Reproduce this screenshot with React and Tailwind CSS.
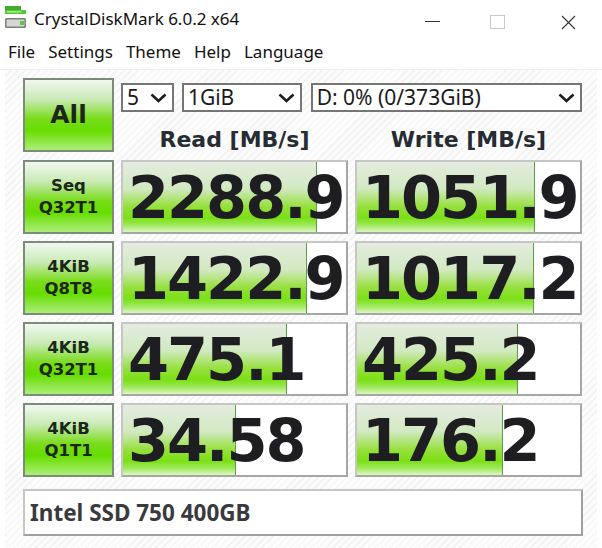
import React from "react";

const rows = [
  { label: ["Seq", "Q32T1"], read: "2288.9", readW: 196, write: "1051.9", writeW: 180 },
  { label: ["4KiB", "Q8T8"], read: "1422.9", readW: 186, write: "1017.2", writeW: 179 },
  { label: ["4KiB", "Q32T1"], read: "475.1", readW: 166, write: "425.2", writeW: 163 },
  { label: ["4KiB", "Q1T1"], read: "34.58", readW: 115, write: "176.2", writeW: 148 },
];

const greenBtn =
  "border-2 border-[#7c8c7a] bg-[linear-gradient(to_bottom,#f2f8f0_0%,#c8eab4_28%,#7adc1c_55%,#66dd00_72%,#acee78_100%)] flex flex-col items-center justify-center font-['DejaVu_Sans',sans-serif] font-bold text-[#1c261c]";

const Chevron = () => (
  <svg width="17" height="10" viewBox="0 0 17 10" className="shrink-0">
    <polyline points="1.5,1.5 8.5,8 15.5,1.5" fill="none" stroke="#1e1e1e" strokeWidth="2.6" />
  </svg>
);

const Select = ({ value, className }) => (
  <div
    className={`h-[29px] border-2 border-[#767676] bg-white flex items-center justify-between pl-[4px] pr-[5px] text-[21px] text-[#1a1a1a] font-['Noto_Sans',sans-serif] leading-none ${className}`}
  >
    <span>{value}</span>
    <Chevron />
  </div>
);

const ValueBox = ({ value, width }) => (
  <div className="relative h-[74px] border-2 border-[#c6c6c6] border-r-[#a6a6a6] border-b-[#a6a6a6] bg-white flex items-center overflow-hidden">
    <div
      className="absolute left-0 top-0 bottom-0 border-r border-[#5c9c48] bg-[linear-gradient(to_bottom,#e4ecdf_0%,#d2e9c2_38%,#96e03c_64%,#7ae014_80%,#9ee85a_90%,#dcf8c0_100%)]"
      style={{ width: width - 2 }}
    />
    <span className="relative pl-[5px] font-['DejaVu_Sans',sans-serif] font-bold text-[59px] tracking-[-2px] leading-none text-[#1e1e22]">
      {value}
    </span>
  </div>
);

export default function App() {
  return (
    <div className="w-[602px] h-[548px] bg-white overflow-hidden font-['Noto_Sans',sans-serif]">
      {/* title bar */}
      <div className="h-[38px] flex items-center relative">
        <svg width="26" height="30" viewBox="0 0 26 30" className="ml-[4px]">
          <rect x="1" y="2" width="16" height="4" fill="#3fae2a" />
          <rect x="1" y="6" width="21" height="4" fill="#58c83a" />
          <rect x="3" y="7" width="14" height="1.5" fill="#a8ec8e" />
          <rect x="1" y="14" width="21" height="10" rx="1.5" fill="#7d7f7d" />
          <rect x="2.5" y="15.5" width="18" height="7" rx="1" fill="#d6d8d6" />
          <rect x="16" y="17" width="4" height="4" fill="#5ac83c" />
        </svg>
        <span className="ml-[4px] text-[17px] text-[#111]">CrystalDiskMark 6.0.2 x64</span>
        <div className="absolute left-[425px] top-[21px] w-[15px] h-px bg-[#333]" />
        <div className="absolute left-[490px] top-[15px] w-[15px] h-[14px] border border-[#c8c8c8]" />
        <svg className="absolute left-[561px] top-[15px]" width="15" height="15" viewBox="0 0 15 15">
          <path d="M1 1 L14 14 M14 1 L1 14" stroke="#333" strokeWidth="1.1" />
        </svg>
      </div>

      {/* menu bar */}
      <div className="h-[32px] flex items-center gap-[13px] pl-[8px] pb-[4px] text-[17px] text-[#111] border-b border-[#efefef]">
        <span>File</span>
        <span>Settings</span>
        <span>Theme</span>
        <span>Help</span>
        <span>Language</span>
      </div>

      {/* content */}
      <div className="ml-[5px] mr-[5px] h-[478px] bg-[repeating-linear-gradient(135deg,#fcfcfc_0px,#fcfcfc_4px,#f2f2f2_4px,#f2f2f2_5px)] pl-[18px] pt-[8px]">
        <div className="grid grid-cols-[91px_227px_227px] gap-[7px]">
          <div className={`${greenBtn} h-[74px] text-[25px]`}>All</div>
          <div className="col-span-2 flex flex-col">
            <div className="flex mt-[5px]">
              <Select value="5" className="w-[53px]" />
              <Select value="1GiB" className="w-[120px] ml-[8px]" />
              <Select value="D: 0% (0/373GiB)" className="w-[272px] ml-[9px]" />
            </div>
            <div className="grid grid-cols-2 gap-[7px] mt-[15px] font-['DejaVu_Sans',sans-serif] font-bold text-[22px] leading-[26px] text-[#262c32] text-center">
              <span>Read [MB/s]</span>
              <span>Write [MB/s]</span>
            </div>
          </div>

          {rows.map((r) => (
            <React.Fragment key={r.read}>
              <div className={`${greenBtn} h-[74px] text-[16.5px] leading-[22px]`}>
                <span>{r.label[0]}</span>
                <span>{r.label[1]}</span>
              </div>
              <ValueBox value={r.read} width={r.readW} />
              <ValueBox value={r.write} width={r.writeW} />
            </React.Fragment>
          ))}
        </div>

        <div className="mt-[12px] w-[560px] h-[47px] border-2 border-[#c6c6c6] border-r-[#a0a0a0] border-b-[#a0a0a0] bg-white flex items-center pl-[5px] font-['Noto_Sans',sans-serif] font-bold text-[22.5px] text-[#3a3a3e]">
          Intel SSD 750 400GB
        </div>
      </div>
    </div>
  );
}
